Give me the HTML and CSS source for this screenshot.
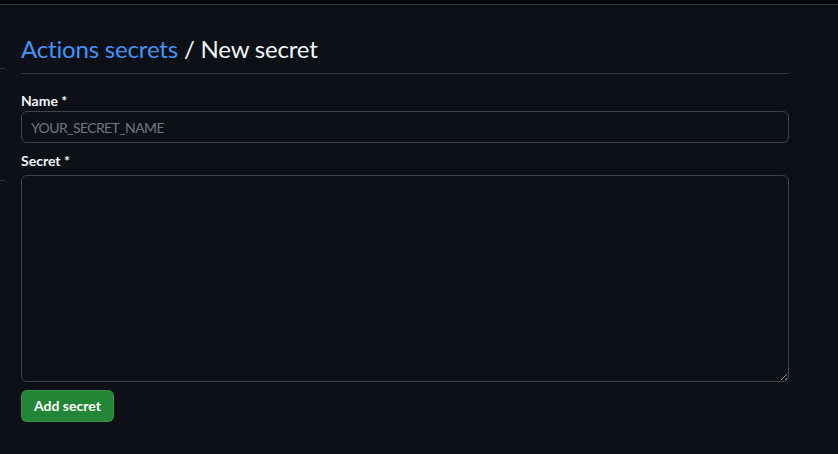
FILE: index.html
```html
<!DOCTYPE html>
<html lang="en">
<head>
<meta charset="utf-8">
<title>New secret</title>
<link rel="stylesheet" href="styles.css">
</head>
<body>
<div class="topbar"></div>
<div class="layout">
  <aside class="side">
    <div class="side-line first"></div>
    <div class="side-line second"></div>
  </aside>
  <main class="content">
    <div class="subhead">
      <h2 class="subhead-heading"><a class="crumb" href="#">Actions secrets</a> / New secret</h2>
    </div>
    <form class="form">
      <label class="label name-label" for="name">Name *</label>
      <input class="input" id="name" type="text" placeholder="YOUR_SECRET_NAME">
      <label class="label secret-label" for="secret">Secret *</label>
      <textarea class="textarea" id="secret"></textarea>
      <button class="btn" type="button">Add secret</button>
    </form>
  </main>
</div>
</body>
</html>
```
FILE: styles.css
```css
html, body {
  margin: 0;
  padding: 0;
  background: #0d1117;
  color: #f0f6fc;
  font-family: "Lato", "Noto Sans", sans-serif;
  font-size: 14px;
}
.topbar {
  height: 4px;
  background: #010409;
  border-bottom: 1px solid #30363d;
}
.layout {
  display: flex;
}
.side {
  width: 5px;
  flex: none;
}
.side-line {
  height: 0;
  border-top: 1px solid #30363d;
}
.side-line.first { margin-top: 63px; }
.side-line.second { margin-top: 111px; }
.content {
  margin-left: 16px;
  width: 768px;
}
.subhead {
  margin-top: 26px;
  padding-bottom: 6px;
  border-bottom: 1px solid #30363d;
  margin-bottom: 17px;
}
.subhead-heading {
  margin: 0;
  font-size: 24px;
  font-weight: 400;
  line-height: 36px;
  letter-spacing: -0.18px;
  color: #f0f6fc;
}
.crumb {
  color: #4493f8;
  text-decoration: none;
}
.form {
  display: flex;
  flex-direction: column;
  align-items: flex-start;
}
.label {
  font-weight: 700;
  font-size: 14px;
  line-height: 20px;
  color: #f0f6fc;
}
.secret-label { margin-top: 8px; margin-bottom: 4px; }
.input, .textarea {
  box-sizing: border-box;
  width: 768px;
  background: #0d1117;
  border: 1px solid #3d444d;
  border-radius: 6px;
  color: #f0f6fc;
  font-family: inherit;
  font-size: 14px;
  padding: 5px 9px;
  outline: none;
}
.input { height: 32px; }
.input::placeholder {
  color: #6e7681;
  letter-spacing: -0.6px;
}
.textarea {
  height: 207px;
  resize: vertical;
}
.btn {
  margin-top: 8px;
  height: 32px;
  padding: 0 12px;
  background: #238636;
  border: 1px solid rgba(240,246,252,0.1);
  border-radius: 6px;
  color: #ffffff;
  font-family: inherit;
  font-weight: 700;
  font-size: 14px;
  line-height: 20px;
}
```
